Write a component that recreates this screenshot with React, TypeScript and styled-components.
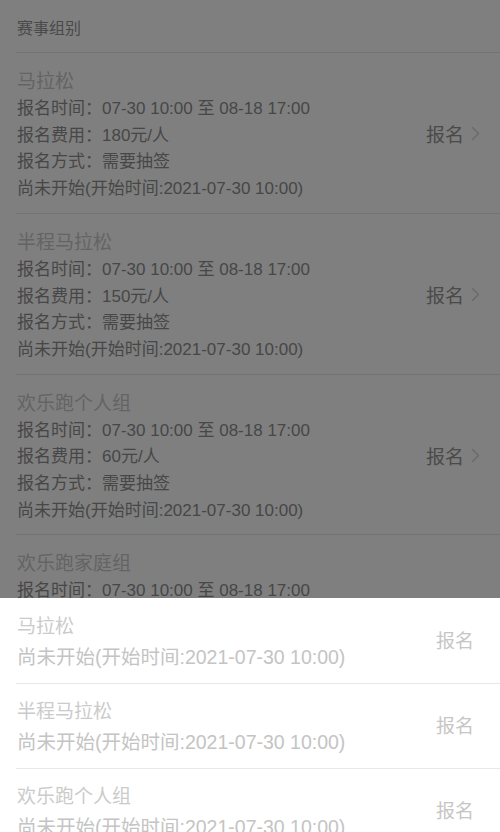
import React from "react";
import styled, { createGlobalStyle } from "styled-components";

const GlobalStyle = createGlobalStyle`
  html, body {
    margin: 0;
    padding: 0;
    height: 100%;
    overflow: hidden;
    background: #ffffff;
    font-family: "Liberation Sans", "Noto Sans CJK SC", sans-serif;
  }
  * { box-sizing: border-box; }
`;

const Page = styled.div`
  background: #ffffff;
  min-height: 832px;
`;

const Header = styled.div`
  height: 52px;
  padding: 16px 0 10px 17px;
  font-size: 16px;
  line-height: 26px;
  color: #949494;
`;

const GroupItem = styled.div`
  margin-left: 16px;
  padding: 14px 20px 10px 1px;
  border-top: 1px solid #e6e6e6;
  display: flex;
  align-items: center;
`;

const GroupInfo = styled.div`
  flex: 1;
  display: flex;
  flex-direction: column;
`;

const GroupTitle = styled.div`
  font-size: 19px;
  line-height: 29px;
  color: #c8c8c8;
`;

const InfoRow = styled.div`
  font-size: 17px;
  line-height: 26.7px;
  color: #8e8e8e;
  white-space: nowrap;
`;

const SignUp = styled.div`
  display: flex;
  align-items: center;
  gap: 7px;
  font-size: 19px;
  color: #949494;
  margin-top: -2px;
`;

const Chevron = () => (
  <svg width="9" height="15" viewBox="0 0 9 15" fill="none">
    <polyline points="1.5,1.5 7.5,7.5 1.5,13.5" stroke="#d6d6d6" strokeWidth="1.6" strokeLinecap="round" strokeLinejoin="round" />
  </svg>
);

const Mask = styled.div`
  position: fixed;
  inset: 0;
  background: rgba(0, 0, 0, 0.5);
`;

const Sheet = styled.div`
  position: fixed;
  left: 0;
  right: 0;
  bottom: 0;
  height: 234px;
  background: #ffffff;
  overflow: hidden;
`;

const SheetItem = styled.div<{ $first?: boolean }>`
  margin-left: 16px;
  padding: 13px 26px 11px 1px;
  border-top: 1px solid ${(p) => (p.$first ? "transparent" : "#e8e8e8")};
  display: flex;
  align-items: center;
`;

const SheetInfo = styled.div`
  flex: 1;
  display: flex;
  flex-direction: column;
`;

const SheetTitle = styled.div`
  font-size: 19px;
  line-height: 30px;
  color: #cbcbcb;
`;

const SheetStatus = styled.div`
  font-size: 19.5px;
  line-height: 30px;
  color: #c4c4c4;
  white-space: nowrap;
`;

const SheetSignUp = styled.div`
  font-size: 19px;
  color: #c6c6c6;
  margin-bottom: 6px;
`;

type Group = { name: string; fee: string };

const groups: Group[] = [
  { name: "马拉松", fee: "180元/人" },
  { name: "半程马拉松", fee: "150元/人" },
  { name: "欢乐跑个人组", fee: "60元/人" },
  { name: "欢乐跑家庭组", fee: "200元/组" },
  { name: "亲子组", fee: "100元/组" },
];

const status = "尚未开始(开始时间:2021-07-30 10:00)";

export default function App() {
  return (
    <>
      <GlobalStyle />
      <Page>
        <Header>赛事组别</Header>
        {groups.map((g) => (
          <GroupItem key={g.name}>
            <GroupInfo>
              <GroupTitle>{g.name}</GroupTitle>
              <InfoRow>报名时间：07-30 10:00 至 08-18 17:00</InfoRow>
              <InfoRow>报名费用：{g.fee}</InfoRow>
              <InfoRow>报名方式：需要抽签</InfoRow>
              <InfoRow>{status}</InfoRow>
            </GroupInfo>
            <SignUp>
              报名
              <Chevron />
            </SignUp>
          </GroupItem>
        ))}
      </Page>
      <Mask />
      <Sheet>
        {groups.slice(0, 3).map((g, i) => (
          <SheetItem key={g.name} $first={i === 0}>
            <SheetInfo>
              <SheetTitle>{g.name}</SheetTitle>
              <SheetStatus>{status}</SheetStatus>
            </SheetInfo>
            <SheetSignUp>报名</SheetSignUp>
          </SheetItem>
        ))}
      </Sheet>
    </>
  );
}
